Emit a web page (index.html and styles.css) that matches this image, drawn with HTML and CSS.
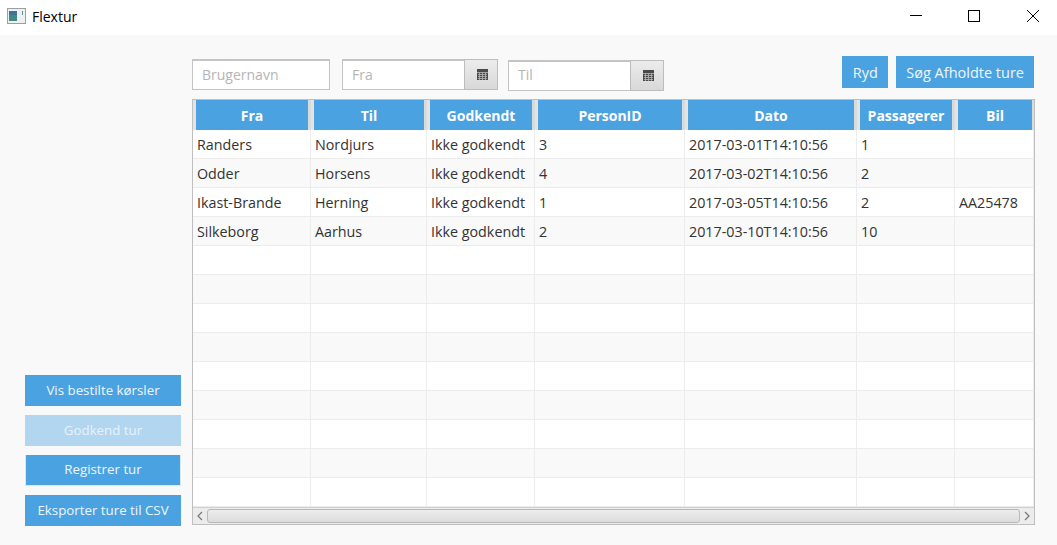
FILE: index.html
```html
<!DOCTYPE html>
<html lang="en">
<head>
    <meta charset="UTF-8">
    <meta name="viewport" content="width=device-width, initial-scale=1.0">
    <title>Flextur</title>
    <link rel="stylesheet" href="styles.css">
</head>
<body>
    <header class="titlebar">
        <svg class="app-icon" width="19" height="16" viewBox="0 0 19 16">
            <rect x="0.5" y="0.5" width="18" height="15" fill="#eef0f0" stroke="#9a9fa3"/>
            <rect x="2" y="3" width="8" height="10" fill="#3f8a86"/>
            <rect x="2" y="3" width="8" height="4" fill="#3c7396"/>
            <rect x="15" y="3" width="1" height="4" fill="#5a8f96"/>
        </svg>
        <span class="app-title">Flextur</span>
        <div class="window-controls">
            <svg width="14" height="14" viewBox="0 0 14 14"><path d="M2 6.5H14" stroke="#000" fill="none"/></svg>
            <svg width="14" height="14" viewBox="0 0 14 14"><rect x="1.5" y="1.5" width="11" height="11" stroke="#000" fill="none"/></svg>
            <svg width="14" height="14" viewBox="0 0 14 14"><path d="M1 1L13 13M13 1L1 13" stroke="#000" fill="none"/></svg>
        </div>
    </header>

    <main class="app-body">
        <aside class="sidebar">
            <button class="btn side-btn">Vis bestilte kørsler</button>
            <button class="btn side-btn disabled">Godkend tur</button>
            <button class="btn side-btn focused">Registrer tur</button>
            <button class="btn side-btn">Eksporter ture til CSV</button>
        </aside>

        <section class="content">
            <div class="toolbar">
                <input class="field user-field" type="text" placeholder="Brugernavn">
                <div class="date-picker">
                    <input class="field date-field" type="text" placeholder="Fra">
                    <span class="date-btn">
                        <svg width="11" height="11" viewBox="0 0 11 11"><rect width="11" height="11" fill="#4a4a4a"/><path d="M0 3.5H11M1 5.5H10M1 7.5H10M1 9.5H10M2.5 3V11M5.5 3V11M8.5 3V11" stroke="#b5b5b5" stroke-width="0.8" fill="none"/></svg>
                    </span>
                </div>
                <div class="date-picker lower">
                    <input class="field date-field" type="text" placeholder="Til">
                    <span class="date-btn">
                        <svg width="11" height="11" viewBox="0 0 11 11"><rect width="11" height="11" fill="#4a4a4a"/><path d="M0 3.5H11M1 5.5H10M1 7.5H10M1 9.5H10M2.5 3V11M5.5 3V11M8.5 3V11" stroke="#b5b5b5" stroke-width="0.8" fill="none"/></svg>
                    </span>
                </div>
                <div class="toolbar-actions">
                    <button class="btn clear-btn">Ryd</button>
                    <button class="btn">Søg Afholdte ture</button>
                </div>
            </div>

            <div class="table-view">
                <table class="trips">
                    <colgroup>
                        <col class="c-fra"><col class="c-til"><col class="c-godkendt"><col class="c-person"><col class="c-dato"><col class="c-pass"><col class="c-bil">
                    </colgroup>
                    <thead>
                        <tr><th>Fra</th><th>Til</th><th>Godkendt</th><th>PersonID</th><th>Dato</th><th>Passagerer</th><th>Bil</th></tr>
                    </thead>
                    <tbody>
                        <tr><td>Randers</td><td>Nordjurs</td><td>Ikke godkendt</td><td>3</td><td>2017-03-01T14:10:56</td><td>1</td><td></td></tr>
                        <tr><td>Odder</td><td>Horsens</td><td>Ikke godkendt</td><td>4</td><td>2017-03-02T14:10:56</td><td>2</td><td></td></tr>
                        <tr><td>Ikast-Brande</td><td>Herning</td><td>Ikke godkendt</td><td>1</td><td>2017-03-05T14:10:56</td><td>2</td><td>AA25478</td></tr>
                        <tr><td>Silkeborg</td><td>Aarhus</td><td>Ikke godkendt</td><td>2</td><td>2017-03-10T14:10:56</td><td>10</td><td></td></tr>
                        <tr><td></td><td></td><td></td><td></td><td></td><td></td><td></td></tr>
                        <tr><td></td><td></td><td></td><td></td><td></td><td></td><td></td></tr>
                        <tr><td></td><td></td><td></td><td></td><td></td><td></td><td></td></tr>
                        <tr><td></td><td></td><td></td><td></td><td></td><td></td><td></td></tr>
                        <tr><td></td><td></td><td></td><td></td><td></td><td></td><td></td></tr>
                        <tr><td></td><td></td><td></td><td></td><td></td><td></td><td></td></tr>
                        <tr><td></td><td></td><td></td><td></td><td></td><td></td><td></td></tr>
                        <tr><td></td><td></td><td></td><td></td><td></td><td></td><td></td></tr>
                        <tr><td></td><td></td><td></td><td></td><td></td><td></td><td></td></tr>
                    </tbody>
                </table>
                <div class="scrollbar">
                    <svg width="14" height="16" viewBox="0 0 14 16"><path d="M9 4L5 8L9 12" stroke="#777" stroke-width="1.2" fill="none"/></svg>
                    <div class="scroll-thumb"></div>
                    <svg width="14" height="16" viewBox="0 0 14 16"><path d="M5 4L9 8L5 12" stroke="#777" stroke-width="1.2" fill="none"/></svg>
                </div>
            </div>
        </section>
    </main>
</body>
</html>
```

FILE: styles.css
```css
* {
    box-sizing: border-box;
}

html, body {
    height: 100%;
}

body {
    margin: 0;
    display: flex;
    flex-direction: column;
    overflow: hidden;
    background: #f9f9f9;
    color: #333;
    font-family: "Open Sans", "Noto Sans", sans-serif;
    font-size: 14.3px;
}

/* Window title bar */
.titlebar {
    height: 35px;
    flex: none;
    display: flex;
    align-items: center;
    padding-left: 7px;
    background: #fff;
}

.app-icon {
    margin-top: -4px;
}

.app-title {
    margin-left: 6px;
    margin-top: -3px;
    color: #000;
    font-size: 14px;
}

.window-controls {
    margin-left: auto;
    margin-right: 17px;
    margin-top: -3px;
    display: flex;
    gap: 45px;
}

/* Main area */
.app-body {
    flex: 1;
    display: flex;
}

.sidebar {
    width: 192px;
    flex: none;
    display: flex;
    flex-direction: column;
    gap: 9px;
    justify-content: flex-end;
    padding: 0 11px 19px 25px;
}

.btn {
    height: 32px;
    padding: 0 10px;
    border: none;
    background: #4ba2e0;
    color: #eef6fc;
    font-family: inherit;
    font-size: 14.5px;
}

.clear-btn {
    width: 46px;
    padding: 0;
}

.side-btn {
    width: 156px;
    height: 31px;
    padding: 0 0 2px;
    font-size: 13.3px;
}

.side-btn.disabled {
    background: #b2d6f0;
    color: #e6f2fa;
}

.side-btn.focused {
    border: solid #d4e9f8;
    border-width: 0 1px 1px;
}

.content {
    width: 843px;
    padding-top: 21px;
}

.toolbar {
    height: 43px;
    display: flex;
    align-items: flex-start;
    padding-top: 3px;
}

.field {
    height: 31px;
    padding: 0 9px 2px;
    border: 2px solid #c4c4c4;
    border-width: 2px 1px 1px 1px;
    background: #fff;
    font-family: inherit;
    font-size: 14px;
    outline: none;
}

.field::placeholder {
    color: #b5b5b5;
}

.user-field {
    width: 138px;
    margin-right: 12px;
}

.date-picker {
    display: flex;
    margin-right: 10px;
}

.date-picker.lower {
    margin-top: 1px;
    margin-right: 0;
}

.date-picker.lower .field {
    padding-bottom: 3px;
}

.date-field {
    width: 122px;
    border-right: none;
}

.date-btn {
    width: 34px;
    height: 31px;
    display: flex;
    align-items: center;
    justify-content: center;
    padding-left: 2px;
    border: 1px solid #bdbdbd;
    background: linear-gradient(#ececec, #d8d8d8);
}

.toolbar-actions {
    margin-left: auto;
    margin-right: 1px;
    margin-top: -3px;
    display: flex;
    gap: 8px;
}

/* Table */
.table-view {
    height: 426px;
    border: 1px solid #bfbfbf;
    background: #fff;
    overflow: hidden;
}

.trips {
    width: 841px;
    table-layout: fixed;
    border-collapse: separate;
    border-spacing: 0;
}

.c-fra { width: 118px; }
.c-til { width: 116px; }
.c-godkendt { width: 108px; }
.c-person { width: 150px; }
.c-dato { width: 172px; }
.c-pass { width: 98px; }
.c-bil { width: 79px; }

.trips th {
    height: 30px;
    padding: 0;
    border-left: 3px solid #e4e4e4;
    border-right: 3px solid #dadada;
    background: #4ba2e0;
    color: #fff;
    font-size: 14px;
    font-weight: 700;
}

.trips th:last-child {
    border-right-width: 2px;
}

.trips td {
    height: 29px;
    padding: 0 0 0 4px;
    border-right: 1px solid #ececec;
    border-bottom: 1px solid #ececec;
    white-space: nowrap;
    overflow: hidden;
}

.trips tbody tr:nth-child(even) td {
    background: #f9f9f9;
}

.scrollbar {
    height: 17px;
    display: flex;
    align-items: center;
    border-top: 1px solid #cfcfcf;
    background: #ececec;
}

.scroll-thumb {
    flex: 1;
    height: 14px;
    border: 1px solid #b8b8b8;
    border-radius: 3px;
    background: linear-gradient(#ededed, #dcdcdc);
}
```
